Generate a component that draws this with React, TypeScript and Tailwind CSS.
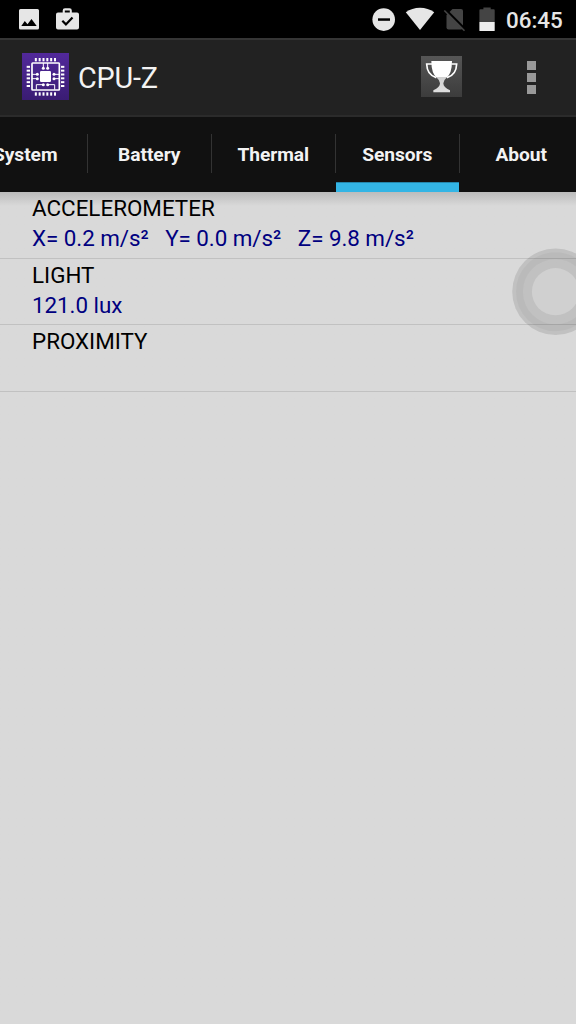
import type { ReactNode } from 'react';

interface Sensor {
  name: string;
  value: string;
}

const TABS = ['System', 'Battery', 'Thermal', 'Sensors', 'About'];
const ACTIVE_TAB = 'Sensors';

const SENSORS: Sensor[] = [
  { name: 'ACCELEROMETER', value: 'X= 0.2 m/s²   Y= 0.0 m/s²   Z= 9.8 m/s²' },
  { name: 'LIGHT', value: '121.0 lux' },
  { name: 'PROXIMITY', value: '' },
];

const PINS = [41, 52.5, 64, 75.5, 87, 98.5];

function StatusIcons({ width, children }: { width: number; children: ReactNode }) {
  return (
    <svg width={width} height="38" viewBox={`0 0 ${width} 38`} className="block shrink-0">
      {children}
    </svg>
  );
}

function StatusBar() {
  return (
    <div className="flex h-[38px] items-center justify-between bg-black">
      {/* notifications: picture, store bag */}
      <StatusIcons width={90}>
        <path
          fill="#e6e6e6"
          fillRule="evenodd"
          d="M20.500 9h17a1.500 1.500 0 0 1 1.500 1.500v17.500a1.500 1.500 0 0 1-1.500 1.500H20.500a1.500 1.500 0 0 1-1.500-1.500V10.500a1.500 1.500 0 0 1 1.500-1.500zM21.300 26h15.400l-5.200-7-4 5.200-2.700-3.200z"
        />
        <path
          fill="#e6e6e6"
          fillRule="evenodd"
          d="M58 12.500h4.700v-2a2.300 2.300 0 0 1 2.300-2.300h4.500a2.300 2.300 0 0 1 2.300 2.300v2H77a2 2 0 0 1 2 2V27.500a2 2 0 0 1-2 2H58a2 2 0 0 1-2-2V14.500a2 2 0 0 1 2-2zM64.800 12.500h5V10.500h-5z"
        />
        <path d="M62.300 20.800l3.600 3.600 6.600-7" fill="none" stroke="#000" strokeWidth="2.200" />
      </StatusIcons>
      <div className="flex items-center">
        <StatusIcons width={138}>
          <circle cx="15.700" cy="19.600" r="11.300" fill="#e6e6e6" />
          <path d="M10 18.300h12v2.500H10z" fill="#000" />
          <path d="M52 30 37.800 12.300Q44 7.700 52 7.700T66.200 12.300z" fill="#e6e6e6" />
          <path d="M84.500 9H93a2 2 0 0 1 2 2v16.500a2 2 0 0 1-2 2H80.500a2 2 0 0 1-2-2V15z" fill="#444" />
          <path d="M76.500 8.500 98 30" stroke="#000" strokeWidth="2.400" />
          <path d="M76.300 10.500 96.500 30.700" stroke="#444" strokeWidth="1.600" />
          <path d="M111.400 22V10.300a1 1 0 0 1 1-1h3V7.500h7.300v1.800h3a1 1 0 0 1 1 1V22z" fill="#444" />
          <path d="M111.400 22h15.300v8.500a.5.5 0 0 1-.5.5h-14.300a.5.5 0 0 1-.5-.5z" fill="#eee" />
        </StatusIcons>
        <span className="w-[70px] pt-[2px] text-[22.400px] leading-[38px] font-medium text-[#e6e6e6]">06:45</span>
      </div>
    </div>
  );
}

function CpuIcon() {
  return (
    <svg width="47" height="47" viewBox="0 0 141 141" className="mb-[2px] shrink-0">
      <defs>
        <linearGradient id="cpu-bg" x1="0" y1="0" x2="0" y2="1">
          <stop offset="0" stopColor="#52299b" />
          <stop offset="1" stopColor="#3a1c73" />
        </linearGradient>
      </defs>
      <rect width="141" height="141" fill="url(#cpu-bg)" />
      <g fill="#fff">
        {PINS.map((p) => (
          <g key={p}>
            <rect x={p - 2.5} y="15" width="6" height="10" />
            <rect x={p - 2.5} y="118" width="6" height="10" />
            <rect x="14" y={p - 2.5} width="10" height="6" />
            <rect x="117" y={p - 2.5} width="10" height="6" />
          </g>
        ))}
        <rect x="54" y="54" width="33" height="33" rx="4" />
        <circle cx="64" cy="46" r="4.500" />
        <circle cx="77" cy="46" r="4.500" />
        <circle cx="46" cy="64" r="4.500" />
        <circle cx="46" cy="77" r="4.500" />
        <circle cx="96" cy="64" r="4.500" />
        <circle cx="96" cy="77" r="4.500" />
        <circle cx="64" cy="95" r="4.500" />
        <circle cx="77" cy="95" r="4.500" />
      </g>
      <g fill="none" stroke="#fff">
        <rect x="30" y="30" width="82" height="81" rx="2" strokeWidth="5" />
        <path
          strokeWidth="3"
          d="M64 46V30M77 46V30M46 64H30M46 77H30M96 64h16M96 77h16M64 95H43v15M77 95h21v15"
        />
      </g>
    </svg>
  );
}

function TrophyIcon() {
  return (
    <svg width="41" height="41" viewBox="0 0 123 123" className="mb-[2px] shrink-0">
      <defs>
        <linearGradient id="trophy-bg" x1="0" y1="0" x2="0" y2="1">
          <stop offset="0" stopColor="#565656" />
          <stop offset="1" stopColor="#3c3c3c" />
        </linearGradient>
        <linearGradient id="trophy-cup" x1="0" y1="15" x2="0" y2="109" gradientUnits="userSpaceOnUse">
          <stop offset="0.510" stopColor="#fff" />
          <stop offset="0.520" stopColor="#cfcfcf" />
          <stop offset="1" stopColor="#e0e0e0" />
        </linearGradient>
      </defs>
      <rect width="123" height="123" fill="url(#trophy-bg)" />
      <path
        d="M33 24H17Q18 57 46 65M91 24h16Q106 57 78 65"
        fill="none"
        stroke="#fff"
        strokeWidth="5"
      />
      <path
        fill="url(#trophy-cup)"
        d="M31 15H93Q93 53 76 66Q67 73 67 82Q67 94 87 103V109H37V103Q57 94 57 82Q57 73 48 66Q31 53 31 15z"
      />
    </svg>
  );
}

function ActionBar() {
  return (
    <header className="flex h-[79px] items-center border-t-2 border-b-2 border-t-[#353535] border-b-[#2b2b2b] bg-[#222] pl-[22px]">
      <CpuIcon />
      <h1 className="ml-[9px] grow pt-[2px] text-[28.800px] leading-none font-normal tracking-[-0.2px] text-[#f3f3f3]">
        CPU-Z
      </h1>
      <TrophyIcon />
      <div className="mr-10 ml-[65px] flex flex-col gap-[3px]">
        <i className="block size-[9px] bg-[#999]" />
        <i className="block size-[9px] bg-[#999]" />
        <i className="block size-[9px] bg-[#999]" />
      </div>
    </header>
  );
}

function TabStrip() {
  return (
    <nav className="flex h-[75px] overflow-hidden bg-[#111]">
      {/* the strip is scrolled, so the first tab is cut off at the left */}
      <div className="-ml-9 flex shrink-0">
        {TABS.map((tab) => (
          <div key={tab} className="relative flex w-[124px] items-center justify-center pr-[1.500px]">
            <span className="text-[19.200px] leading-none font-bold tracking-[-0.05px] text-[#f3f3f3]">{tab}</span>
            {tab === ACTIVE_TAB && (
              <div className="absolute right-px bottom-0 left-0 h-[10px] border-t border-[#2586ab] bg-[#33b5e5]" />
            )}
            <div className="absolute top-[17px] right-0 h-[39px] w-px bg-[#333]" />
          </div>
        ))}
      </div>
    </nav>
  );
}

function SensorRow({ sensor }: { sensor: Sensor }) {
  return (
    <li className="h-[66.500px] border-b border-[#c1c1c1] pt-[1px] pl-8 text-[22.400px]">
      <p className="h-[30px] leading-[30px] text-black">{sensor.name}</p>
      <p className="leading-[30px] tracking-[-0.045px] whitespace-pre text-[#000080]">{sensor.value}</p>
    </li>
  );
}

export default function App() {
  return (
    <div className="relative flex h-[1024px] w-[576px] flex-col overflow-hidden bg-[#d9d9d9] font-['Roboto',sans-serif]">
      <StatusBar />
      <ActionBar />
      <TabStrip />
      <ul className="grow bg-linear-to-b from-[#bcbcbc] to-[#d9d9d9] to-[14px]">
        {SENSORS.map((s) => (
          <SensorRow key={s.name} sensor={s} />
        ))}
      </ul>
      {/* floating assistive button, half over the right edge */}
      <svg className="absolute top-[248px] left-[512px]" width="64" height="88" viewBox="0 0 64 88">
        <circle cx="43.500" cy="43.700" r="43.300" fill="#000" fillOpacity="0.110" />
        <circle cx="43.500" cy="43.700" r="36" fill="none" stroke="#000" strokeOpacity="0.030" strokeWidth="7" />
        <circle cx="43.500" cy="43.700" r="23.600" fill="#d0d0d0" />
      </svg>
    </div>
  );
}
